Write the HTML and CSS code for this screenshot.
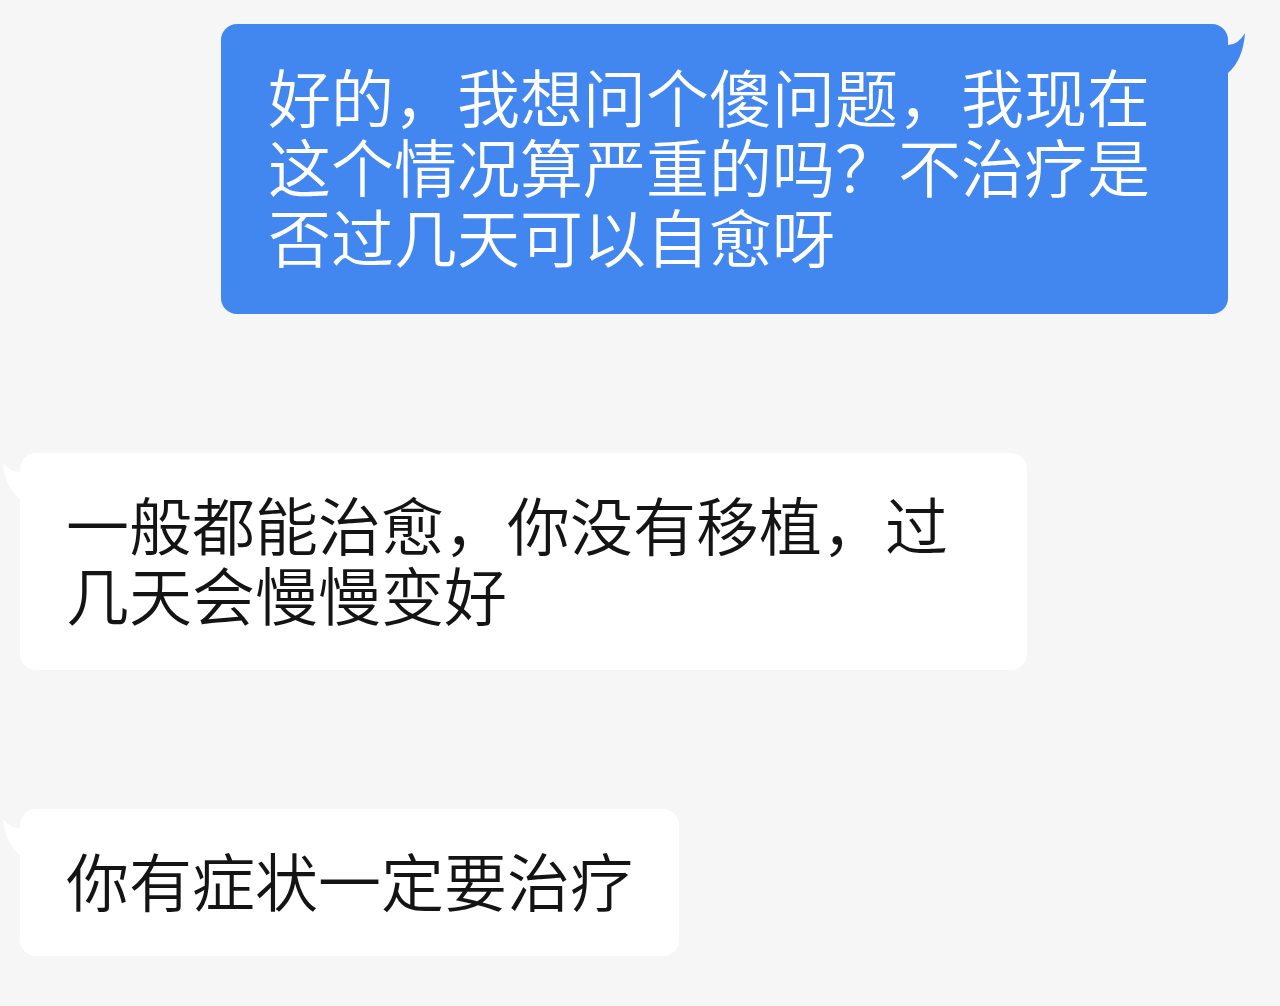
FILE: index.html
```html
<!DOCTYPE html>
<html lang="zh-CN">
<head>
    <meta charset="UTF-8">
    <meta name="viewport" content="width=device-width, initial-scale=1.0">
    <title>聊天</title>
    <link rel="stylesheet" href="styles.css">
</head>
<body>
    <div class="chat">
        <div class="row mine">
            <div class="bubble blue wide">
                好的，我想问个傻问题，我现在这个情况算严重的吗？不治疗是否过几天可以自愈呀
                <svg class="tail tail-r" width="20" height="52" viewBox="0 0 20 52"><path d="M-2 21 L0 21 Q10 21 17 9 Q15 36 0 49 L-2 49 Z" fill="#4287ef"/></svg>
            </div>
        </div>
        <div class="row theirs">
            <div class="bubble white wide">
                一般都能治愈，你没有移植，过几天会慢慢变好
                <svg class="tail tail-l" width="20" height="52" viewBox="-20 0 20 52"><path d="M2 19 L0 19 Q-10 19 -17 10 Q-15 34 0 46 L2 46 Z" fill="#ffffff"/></svg>
            </div>
        </div>
        <div class="row theirs">
            <div class="bubble white">
                你有症状一定要治疗
                <svg class="tail tail-l" width="20" height="52" viewBox="-20 0 20 52"><path d="M2 19 L0 19 Q-10 19 -17 10 Q-15 34 0 46 L2 46 Z" fill="#ffffff"/></svg>
            </div>
        </div>
    </div>
</body>
</html>
```

FILE: styles.css
```css
*{
    margin: 0;
    padding: 0;
}
body{
    background: #f6f6f6;
    font-family: "Noto Sans CJK SC", "Noto Sans", sans-serif;
    width: 1280px;
    height: 1006px;
    overflow: hidden;
}
.chat{
    display: flex;
    flex-direction: column;
    gap: 139px;
    padding-top: 24px;
}
.row{
    display: flex;
}
.mine{
    justify-content: flex-end;
    padding-right: 52px;
}
.theirs{
    justify-content: flex-start;
    padding-left: 20px;
}
.bubble{
    position: relative;
    font-size: 63px;
    font-weight: 350;
    line-height: 70px;
    padding: 36px 47px 44px;
    border-radius: 16px;
}
.wide{
    width: 1007px;
    box-sizing: border-box;
}
.blue{
    background: #4287ef;
    color: #fff;
}
.white{
    background: #fff;
    color: #141414;
    padding: 35px 46px 42px;
}
.tail{
    position: absolute;
    top: 0;
}
.tail-r{
    left: 100%;
}
.tail-l{
    right: 100%;
}
```
